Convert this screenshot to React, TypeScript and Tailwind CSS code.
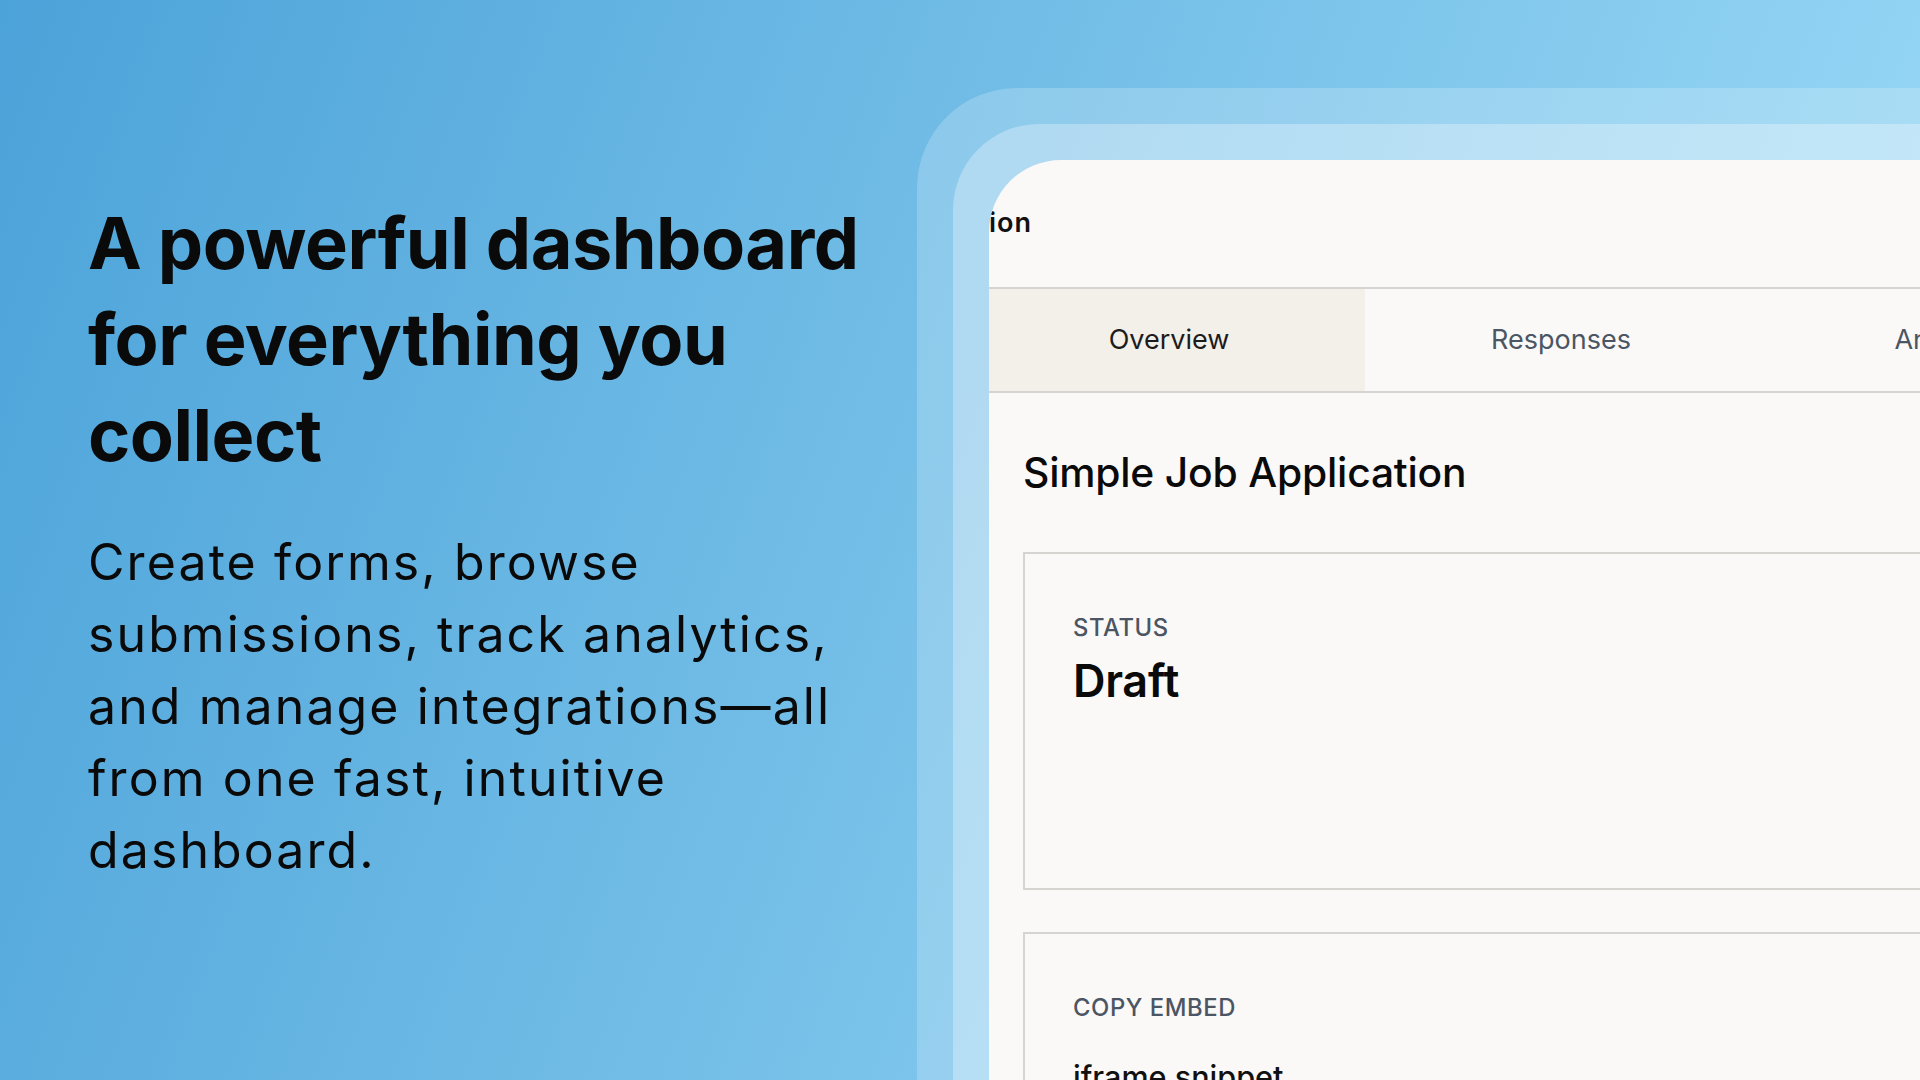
import React from 'react';

const tabs = ['Overview', 'Responses', 'Analytics', 'Integrations'];

function StatCard({ label, children, className }: { label: string; children: React.ReactNode; className?: string }) {
  return (
    <div className={`border-2 border-[#d6d4d1] px-[48px] pt-[57px] ${className ?? ''}`}>
      <div className="text-[23.8px] leading-[34px] font-medium tracking-wide uppercase text-[#4b5563]">{label}</div>
      {children}
    </div>
  );
}

function DashboardCard() {
  return (
    <div className="w-[1100px] h-[1000px] bg-[#faf9f7] rounded-tl-[72px] overflow-hidden">
      <div className="ml-[-16px] flex flex-col">
        {/* header, clipped by the rounded corner */}
        <div className="h-[127px] flex items-center">
          <div className="w-[59px] flex justify-end">
            <span className="shrink-0 whitespace-nowrap text-[27px] font-semibold tracking-[1px] text-[#111]">
              Simple Job Application
            </span>
          </div>
        </div>

        <div className="flex border-y-2 border-[#d6d4d1] h-[106px]">
          {tabs.map((t, i) => (
            <div
              key={t}
              className={`w-[392px] shrink-0 flex items-center justify-center text-[27px] ${
                i === 0 ? 'bg-[#f3efe9] text-[#1c1c1c]' : 'text-[#4b5563]'
              }`}
            >
              {t}
            </div>
          ))}
        </div>

        <div className="pl-[50px] pt-[52px]">
          <h2 className="text-[40.8px] leading-[54px] font-medium text-[#0a0a0a] tracking-[-0.2px]">Simple Job Application</h2>

          <StatCard label="Status" className="mt-[53px] h-[338px]">
            <div className="mt-[8px] text-[45px] leading-[56px] font-semibold text-[#0a0a0a] tracking-[-0.3px]">Draft</div>
          </StatCard>

          <StatCard label="Copy embed" className="mt-[42px] h-[300px]">
            <div className="mt-[30px] text-[30.6px] leading-[44px] font-medium text-[#111]">iframe snippet</div>
          </StatCard>
        </div>
      </div>
    </div>
  );
}

export default function App() {
  return (
    <div className="w-full h-[1080px] overflow-hidden flex font-['Inter',sans-serif] bg-[linear-gradient(110deg,#4ca3d9_0%,#a0ddf8_100%)]">
      <div className="w-[917px] shrink-0 flex items-center pl-[88px]">
        <div className="w-[800px]">
          <h1 className="text-[72px] leading-[96px] font-bold text-[#0a0a0a] tracking-[-0.5px] mb-[43px]">
            A powerful dashboard for everything you collect
          </h1>
          <p className="text-[50px] leading-[72px] tracking-[2.1px] text-[#0a0a0a]">
            Create forms, browse submissions, track analytics, and manage integrations—all from one fast, intuitive
            dashboard.
          </p>
        </div>
      </div>

      <div className="flex-1 pt-[88px]">
        <div className="w-[1150px] h-[1100px] bg-white/20 rounded-tl-[100px] pl-[36px] pt-[36px]">
          <div className="w-[1120px] h-[1100px] bg-white/30 rounded-tl-[86px] pl-[36px] pt-[36px]">
            <DashboardCard />
          </div>
        </div>
      </div>
    </div>
  );
}
